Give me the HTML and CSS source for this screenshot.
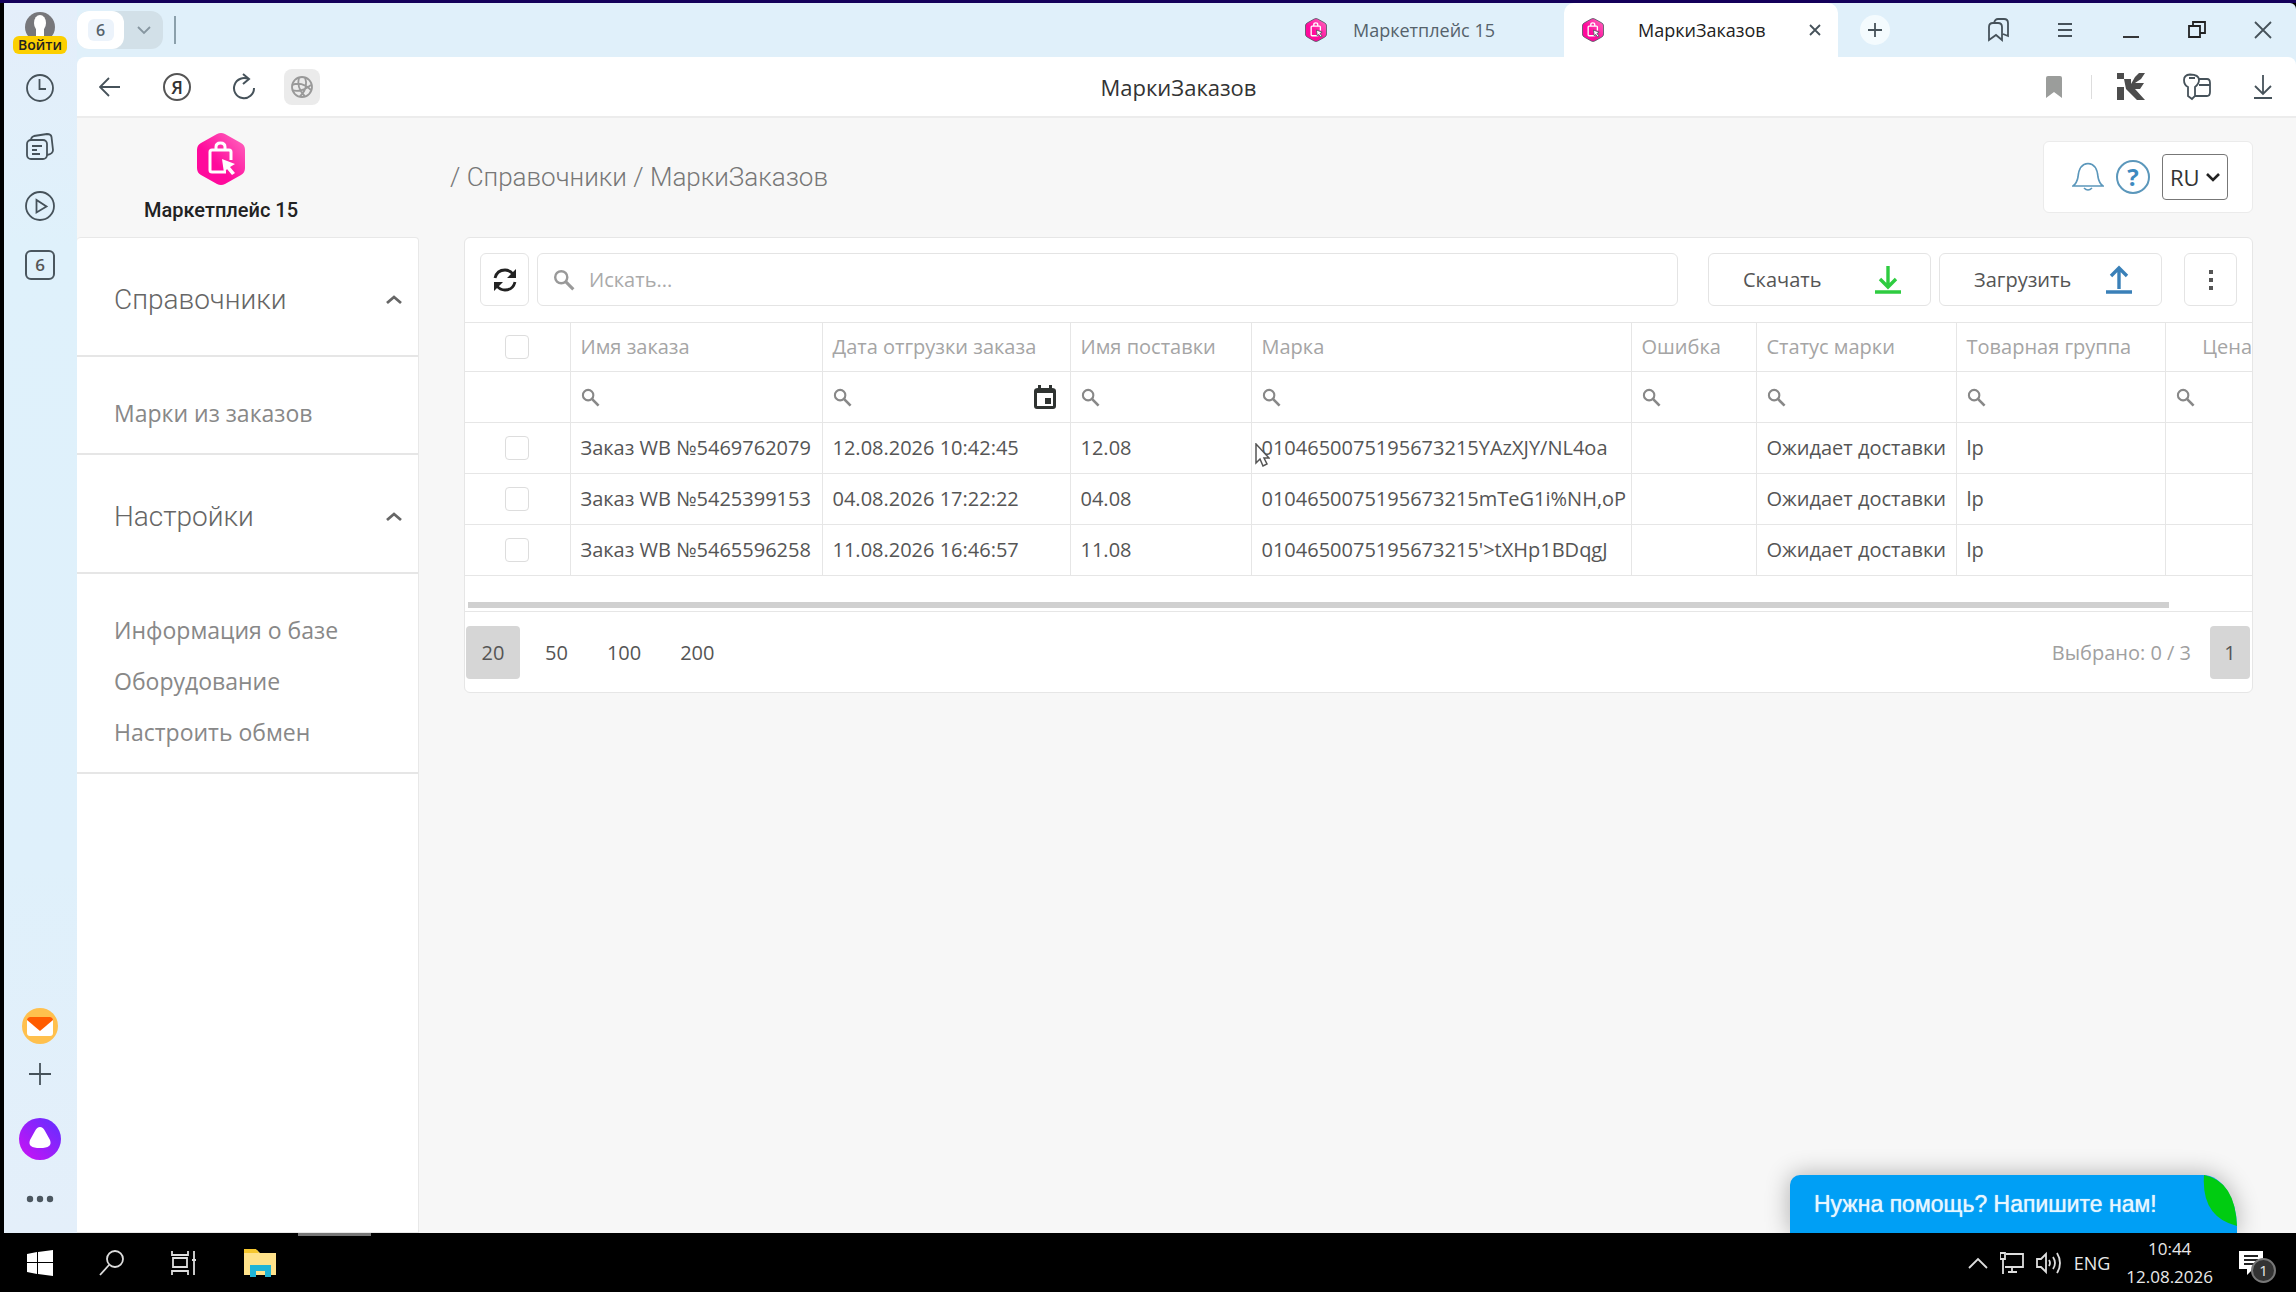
FILE: index.html
```html
<!DOCTYPE html>
<html lang="ru">
<head>
    <meta charset="UTF-8">
    <meta name="viewport" content="width=device-width, initial-scale=1.0">
    <title>МаркиЗаказов</title>
    <link rel="stylesheet" href="styles.css">
</head>
<body>
<svg class="defs" aria-hidden="true">
    <defs>
        <linearGradient id="pink" x1="0" y1="1" x2="1" y2="0">
            <stop offset="0.4" stop-color="#ff0a9c"/>
            <stop offset="1" stop-color="#ff6cc0"/>
        </linearGradient>
        <linearGradient id="violet" x1="0" y1="1" x2="1" y2="0">
            <stop offset="0.1" stop-color="#c314f5"/>
            <stop offset="0.9" stop-color="#6a2cff"/>
        </linearGradient>
    </defs>
    <symbol id="logo" viewBox="0 0 50 54">
        <path d="M21 2q4-2 8 0l16 9q4 2 4 7v18q0 5-4 7l-16 9q-4 2-8 0L5 43q-4-2-4-7V18q0-5 4-7z" fill="url(#pink)"/>
        <path d="M35 28V20q0-2-2-2H16q-2 0-2 2v18q0 2 2 2h14M20 18v-3q0-4 4.500-4t4.500 4v3" fill="none" stroke="#fff" stroke-width="3"/>
        <path d="M26 27l13 5-5 3 5 6-3 2-5-6-3 4z" fill="#fff"/>
    </symbol>
    <symbol id="search" viewBox="0 0 20 20">
        <circle cx="7.500" cy="7.500" r="5.500" fill="none" stroke="currentColor" stroke-width="2.200"/>
        <path d="M11.500 11.500l7 7" stroke="currentColor" stroke-width="2.800"/>
    </symbol>
    <symbol id="up" viewBox="0 0 16 10">
        <path d="M1 8l7-6 7 6" fill="none" stroke="currentColor" stroke-width="2.800"/>
    </symbol>
</svg>

<div class="browser">
    <nav class="rail" aria-label="Боковая панель">
        <button class="account" aria-label="Войти">
            <svg width="30" height="30" viewBox="0 0 30 30"><circle cx="15" cy="15" r="15" fill="#77777b"/><ellipse cx="15" cy="11" rx="6" ry="8" fill="#fff"/><path d="M11 16h8v9h-8z" fill="#fff"/></svg>
            <span class="badge">Войти</span>
        </button>
        <button class="rail-btn" aria-label="История">
            <svg width="30" height="30" viewBox="0 0 30 30"><circle cx="15" cy="15" r="13"/><path d="M14.500 6v10H21"/></svg>
        </button>
        <button class="rail-btn" aria-label="Коллекции">
            <svg width="30" height="30" viewBox="0 0 30 30"><rect x="2" y="8" width="20" height="19" rx="4"/><path d="M7 14h10M7 18h5M7 22h8M6 8q0-3 3-4l13-2q4 0 4.500 3l1.500 13q0 4-6 5"/></svg>
        </button>
        <button class="rail-btn" aria-label="Видео">
            <svg width="30" height="30" viewBox="0 0 30 30"><circle cx="15" cy="15" r="14"/><path d="M11.500 9v12.500l10-6z"/></svg>
        </button>
        <button class="rail-btn" aria-label="Вкладки"><span class="tab-count">6</span></button>
        <div class="rail-space"></div>
        <button class="rail-btn" aria-label="Почта">
            <svg width="36" height="36" viewBox="0 0 36 36"><circle cx="18" cy="18" r="18" fill="#ffc04d" stroke="none"/><rect x="5" y="9" width="26" height="19" rx="3" fill="#fff" stroke="none"/><path d="M5 12q0-3 3-3h20q3 0 3 3L18 23z" fill="#ff5c00" stroke="none"/></svg>
        </button>
        <button class="rail-btn rail-plus" aria-label="Добавить">
            <svg width="24" height="24" viewBox="0 0 24 24"><path d="M12 1v22M1 12h22"/></svg>
        </button>
        <button class="rail-btn rail-alice" aria-label="Алиса">
            <svg width="42" height="42" viewBox="0 0 42 42"><circle cx="21" cy="21" r="21" fill="url(#violet)" stroke="none"/><path d="M21 9q3 0 5 4l5 9q3 8-10 8t-10-8l5-9q2-4 5-4z" fill="#fff" stroke="none"/></svg>
        </button>
        <button class="rail-btn rail-more" aria-label="Ещё">
            <svg width="28" height="8" viewBox="0 0 28 8"><circle cx="4" cy="4" r="3.200" fill="#4c5760" stroke="none"/><circle cx="14" cy="4" r="3.200" fill="#4c5760" stroke="none"/><circle cx="24" cy="4" r="3.200" fill="#4c5760" stroke="none"/></svg>
        </button>
    </nav>

    <header class="tabs">
        <div class="group">
            <button class="group-count"><span>6</span></button>
            <button class="group-more" aria-label="Группы"><svg width="14" height="9" viewBox="0 0 14 9"><path d="M1 1l6 6 6-6"/></svg></button>
        </div>
        <span class="tabs-line"></span>
        <div class="tabs-space"></div>
        <a class="tab" href="#"><svg class="tab-icon"><use href="#logo"/></svg><span>Маркетплейс 15</span></a>
        <div class="tab active">
            <svg class="tab-icon"><use href="#logo"/></svg><a href="#">МаркиЗаказов</a>
            <button class="tab-close" aria-label="Закрыть вкладку"><svg width="12" height="12" viewBox="0 0 12 12"><path d="M1 1l10 10M11 1L1 11"/></svg></button>
        </div>
        <button class="new-tab" aria-label="Новая вкладка"><svg width="14" height="14" viewBox="0 0 14 14"><path d="M7 0v14M0 7h14"/></svg></button>
        <div class="window-btns">
            <button aria-label="Закладки"><svg width="22" height="24" viewBox="0 0 22 24"><path d="M1 22V9q0-4 4-4h5q4 0 4 4v13l-6-5zM6 5q1-4 4-4h6q4 0 4 4v13l-5-2"/></svg></button>
            <button aria-label="Меню"><svg width="16" height="16" viewBox="0 0 16 16"><path d="M1 2h14M1 8h14M1 14h14"/></svg></button>
            <button aria-label="Свернуть"><svg width="16" height="16" viewBox="0 0 16 16"><path d="M0 15h16" stroke="#222"/></svg></button>
            <button aria-label="Развернуть"><svg width="18" height="18" viewBox="0 0 18 18"><path d="M1 5h11v11H1zM5 5V1h12v11h-5" stroke="#222"/></svg></button>
            <button aria-label="Закрыть"><svg width="18" height="18" viewBox="0 0 18 18"><path d="M1 1l16 16M17 1L1 17"/></svg></button>
        </div>
    </header>

    <div class="navbar">
        <button class="nav-btn" aria-label="Назад"><svg width="22" height="20" viewBox="0 0 22 20"><path d="M21 10H2M10 1l-9 9 9 9"/></svg></button>
        <button class="nav-btn ya" aria-label="Яндекс">Я</button>
        <button class="nav-btn" aria-label="Обновить"><svg width="24" height="28" viewBox="0 0 24 28"><path d="M17 6.500A10 10 0 1 0 22 15M11 1l6 5-6 5" stroke-width="2"/></svg></button>
        <button class="nav-btn site" aria-label="О сайте"><svg width="22" height="22" viewBox="0 0 22 22"><circle cx="11" cy="11" r="10"/><path d="M8 1.500q-3 10 6 19M14 1.500q4 10-5 19M1 9q10-4 19 5M1 14q9 3 19-5"/></svg></button>
        <span class="page-title">МаркиЗаказов</span>
        <button class="nav-btn" aria-label="В закладки"><svg width="16" height="22" viewBox="0 0 16 22"><path d="M0 2q0-2 2-2h12q2 0 2 2v20l-8-6-8 6z" fill="#9b9d9b" stroke="none"/></svg></button>
        <span class="nav-line"></span>
        <button class="nav-btn" aria-label="Расширение"><svg width="30" height="29" viewBox="0 0 30 29"><path d="M1 1h7v6H1zM1 15h7v13H1zM8 7h7v5l4-7 4-4h6l-4 6-6 4h9l-4 6h-5l10 11h-8L10 17z" fill="#4d4d4d" stroke="none"/></svg></button>
        <button class="nav-btn" aria-label="Пароли"><svg width="28" height="28" viewBox="0 0 28 28"><path d="M5 14Q1 12 1 7q0-5 6-5.500 9 0 9 5.500 0 4-4 7v9l-3 3-4-3zM6 5h6M16 6h8q3 0 3 4v9q0 4-3 4H12M16 12h11"/></svg></button>
        <button class="nav-btn" aria-label="Загрузки"><svg width="20" height="24" viewBox="0 0 20 24"><path d="M10 0v18M2 11l8 8 8-8M1 23h18"/></svg></button>
    </div>

    <div class="page">
        <aside class="sidebar">
            <a class="brand" href="#"><svg width="50" height="54"><use href="#logo"/></svg><span>Маркетплейс 15</span></a>
            <nav class="menu">
                <button class="menu-head">Справочники <svg width="16" height="10"><use href="#up"/></svg></button>
                <div class="menu-items"><a href="#">Марки из заказов</a></div>
                <button class="menu-head">Настройки <svg width="16" height="10"><use href="#up"/></svg></button>
                <div class="menu-items">
                    <a href="#">Информация о базе</a>
                    <a href="#">Оборудование</a>
                    <a href="#">Настроить обмен</a>
                </div>
            </nav>
        </aside>

        <main class="content">
            <div class="top">
                <div class="crumbs">/ <a href="#">Справочники</a> / <a href="#">МаркиЗаказов</a></div>
                <div class="user-box">
                    <button aria-label="Уведомления"><svg width="32" height="30" viewBox="0 0 32 30"><path d="M1 24q4-3 5-9Q7 2 16 1.500 25 2 26 15q1 6 5 9zM12 26q4 4 8 0" fill="none" stroke="#5b97bb" stroke-width="1.600"/></svg></button>
                    <button class="help" aria-label="Справка">?</button>
                    <div class="lang">
                        <select aria-label="Язык"><option>RU</option></select>
                        <svg width="14" height="9" viewBox="0 0 14 9"><path d="M1 1l6 6 6-6" fill="none" stroke="#222" stroke-width="2.600"/></svg>
                    </div>
                </div>
            </div>

            <section class="card">
                <div class="toolbar">
                    <button class="tool refresh" aria-label="Обновить список">
                        <svg width="24" height="24" viewBox="0 0 24 24"><path d="M2 10Q4 2 12 2q5 0 8 4M22 14q-2 8-10 8-5 0-8-4" fill="none" stroke="#222" stroke-width="2.800"/><path d="M23 1v9h-9zM1 23v-9h9z" fill="#222"/></svg>
                    </button>
                    <label class="search"><svg width="22" height="22"><use href="#search"/></svg><input type="text" placeholder="Искать..." aria-label="Искать"></label>
                    <button class="tool wide">Скачать <svg width="26" height="30" viewBox="0 0 26 30"><path d="M13 1v20M5 14l8 8 8-8M0 27h26" fill="none" stroke="#2ecc40" stroke-width="3.400"/></svg></button>
                    <button class="tool wide">Загрузить <svg width="26" height="30" viewBox="0 0 26 30"><path d="M13 24V4M5 11l8-8 8 8M0 27h26" fill="none" stroke="#3a80b8" stroke-width="3.400"/></svg></button>
                    <button class="tool kebab" aria-label="Действия"><svg width="4" height="20" viewBox="0 0 4 20"><path d="M0 0h4v4H0zM0 8h4v4H0zM0 16h4v4H0z" fill="#555"/></svg></button>
                </div>

                <div class="table-wrap">
                    <table>
                        <colgroup>
                            <col class="c-check"><col class="c-order"><col class="c-date"><col class="c-supply"><col class="c-mark"><col class="c-error"><col class="c-status"><col class="c-group"><col>
                        </colgroup>
                        <thead>
                            <tr>
                                <th><input type="checkbox" aria-label="Выбрать все"></th>
                                <th>Имя заказа</th><th>Дата отгрузки заказа</th><th>Имя поставки</th><th>Марка</th><th>Ошибка</th><th>Статус марки</th><th>Товарная группа</th><th class="price">Цена</th>
                            </tr>
                            <tr class="filters">
                                <td></td>
                                <td><label><svg><use href="#search"/></svg><input type="text" aria-label="Имя заказа"></label></td>
                                <td><label><svg><use href="#search"/></svg><input type="text" aria-label="Дата отгрузки заказа"><svg class="calendar" viewBox="0 0 22 24"><path d="M4 0h3v3h8V0h3v3q4 0 4 3v15q0 3-3 3H3q-3 0-3-3V6q0-3 4-3zM3 8v13h16V8z" fill="#2f3331" fill-rule="evenodd"/><path d="M11 13h6v6h-6z" fill="#2f3331"/></svg></label></td>
                                <td><label><svg><use href="#search"/></svg><input type="text" aria-label="Имя поставки"></label></td>
                                <td><label><svg><use href="#search"/></svg><input type="text" aria-label="Марка"></label></td>
                                <td><label><svg><use href="#search"/></svg><input type="text" aria-label="Ошибка"></label></td>
                                <td><label><svg><use href="#search"/></svg><input type="text" aria-label="Статус марки"></label></td>
                                <td><label><svg><use href="#search"/></svg><input type="text" aria-label="Товарная группа"></label></td>
                                <td><label><svg><use href="#search"/></svg><input type="text" aria-label="Цена"></label></td>
                            </tr>
                        </thead>
                        <tbody>
                            <tr>
                                <td><input type="checkbox" aria-label="Выбрать заказ 5469762079"></td>
                                <td>Заказ WB №5469762079</td><td>12.08.2026 10:42:45</td><td>12.08</td>
                                <td class="hovered">0104650075195673215YAzXJY/NL4oa<svg class="cursor" viewBox="0 0 15 24"><path d="M1 1v19l4-4 3 7 4-2-3-6h5z" fill="#fff" stroke="#555" stroke-width="1.500"/></svg></td>
                                <td></td><td>Ожидает доставки</td><td>lp</td><td></td>
                            </tr>
                            <tr>
                                <td><input type="checkbox" aria-label="Выбрать заказ 5425399153"></td>
                                <td>Заказ WB №5425399153</td><td>04.08.2026 17:22:22</td><td>04.08</td>
                                <td>0104650075195673215mTeG1i%NH,oP</td>
                                <td></td><td>Ожидает доставки</td><td>lp</td><td></td>
                            </tr>
                            <tr>
                                <td><input type="checkbox" aria-label="Выбрать заказ 5465596258"></td>
                                <td>Заказ WB №5465596258</td><td>11.08.2026 16:46:57</td><td>11.08</td>
                                <td>0104650075195673215'&gt;tXHp1BDqgJ</td>
                                <td></td><td>Ожидает доставки</td><td>lp</td><td></td>
                            </tr>
                        </tbody>
                    </table>
                </div>
                <div class="scroll"><div class="scroll-thumb"></div></div>

                <div class="pager">
                    <button class="current">20</button>
                    <button>50</button>
                    <button>100</button>
                    <button>200</button>
                    <span class="selected">Выбрано: 0 / 3</span>
                    <button class="current">1</button>
                </div>
            </section>
        </main>

        <button class="chat">Нужна помощь? Напишите нам!
            <svg class="leaf" viewBox="0 0 34 52"><path d="M1 0Q32 6 34 51Q-2 42 1 0z" fill="#0c1"/></svg>
        </button>
    </div>
</div>

<footer class="taskbar">
    <button aria-label="Пуск"><svg width="26" height="26" viewBox="0 0 26 26"><path d="M0 4l10-2v10H0zM11 2l15-2v12H11zM0 13h10v11L0 22zM11 13h15v13l-15-2z" fill="#fff"/></svg></button>
    <button aria-label="Поиск"><svg width="26" height="26" viewBox="0 0 26 26"><circle cx="16" cy="9" r="8"/><path d="M10 15L1 25"/></svg></button>
    <button aria-label="Представление задач"><svg width="26" height="24" viewBox="0 0 26 24"><path d="M1 0v4h16V0M2 7h14v9H2zM1 24v-4h16v4M23 0v24M21 9h4"/></svg></button>
    <button class="explorer" aria-label="Проводник"><svg width="32" height="28" viewBox="0 0 32 28"><path d="M0 1h13l3 3h16v22H0z" fill="#ffe28a"/><path d="M0 0h12l3 4H0z" fill="#f5c62e"/><path d="M6 16h21v12h-6v-6h-9v6H6z" fill="#1fb4d6"/></svg></button>
    <span class="running"></span>
    <div class="tray">
        <svg width="20" height="12" viewBox="0 0 20 12"><path d="M1 11l9-9 9 9"/></svg>
        <svg width="24" height="22" viewBox="0 0 24 22"><path d="M6 2h17v13H5M3 8v14M8 20h9M12 15v5M0 1h5v6H0z"/></svg>
        <svg width="26" height="24" viewBox="0 0 26 24"><path d="M1 8h4l5-5v18l-5-5H1zM13 9q2 3 0 6M17 6q4 6 0 12M21 2q6 10 0 20"/></svg>
        <span class="input-lang">ENG</span>
        <div class="clock"><time>10:44</time><time>12.08.2026</time></div>
        <button class="notice" aria-label="Уведомления системы"><svg width="24" height="24" viewBox="0 0 24 24"><path d="M0 0h24v18H14l-6 6v-6H0z" fill="#fff"/><path d="M5 5h14M5 9h14M5 13h10" stroke="#222"/></svg><span>1</span></button>
    </div>
</footer>
</body>
</html>
```
FILE: styles.css
```css
* {
    box-sizing: border-box;
}
body {
    margin: 0;
    min-height: 100vh;
    display: flex;
    flex-direction: column;
    padding: 3px 0 0 4px;
    background: linear-gradient(#14005a 3px, #000 3px);
    font-family: "Open Sans", sans-serif;
    font-size: 20px;
    color: #555;
}
button {
    border: none;
    padding: 0;
    background: none;
    font: inherit;
    color: inherit;
    display: flex;
    align-items: center;
    justify-content: center;
    cursor: pointer;
}
a {
    color: inherit;
    text-decoration: none;
}
svg {
    flex-shrink: 0;
}
.defs {
    position: absolute;
    width: 0;
    height: 0;
}

/* browser frame */
.browser {
    flex: 1;
    display: grid;
    grid-template-columns: 73px 1fr;
    grid-template-rows: 54px 61px 1fr;
    background: #e0f0fa;
    border-radius: 6px 6px 0 0;
}
.rail {
    grid-row: 1 / 4;
    display: flex;
    flex-direction: column;
    align-items: center;
    padding: 5px 1px 0 0;
    background: linear-gradient(#e4eefa, #dff1fb 20%, #dff0fb 70%, #e4effa);
}
.account {
    flex-direction: column;
    height: 50px;
}
.badge {
    margin-top: -6px;
    width: 54px;
    border-radius: 6px;
    background: #fccf00;
    color: #222;
    font: 600 14px/18px "Open Sans", sans-serif;
}
.rail-btn {
    height: 59px;
    width: 60px;
}
.rail-btn svg,
.tabs svg,
.navbar svg {
    fill: none;
    stroke: #46525a;
    stroke-width: 1.8;
}
.tab-count {
    width: 30px;
    height: 30px;
    border: 2px solid #4a565e;
    border-radius: 6px;
    font: 600 17px/26px "Open Sans", sans-serif;
}
.rail-space {
    flex: 1;
}
.rail-plus {
    height: 38px;
}
.rail-alice {
    height: 91px;
}
.rail-more {
    height: 30px;
    margin-bottom: 19px;
}
.tabs {
    display: flex;
    align-items: center;
    font-size: 18px;
    color: #55626b;
}
.group {
    display: flex;
    height: 38px;
    width: 86px;
    border-radius: 12px;
    background: #d2e0e8;
}
.group-count {
    width: 47px;
    border-radius: 12px;
    background: #fff;
}
.group-count span {
    width: 26px;
    border-radius: 6px;
    background: #ecf3fb;
    font-weight: 600;
    font-size: 16px;
}
.group-more {
    flex: 1;
}
.group-more svg {
    stroke: #8696a0;
}
.tabs-line {
    width: 2px;
    height: 28px;
    margin-left: 11px;
    background: #8ba0ab;
}
.tabs-space {
    flex: 1;
}
.tab {
    display: flex;
    align-items: center;
    align-self: stretch;
    width: 277px;
    padding-left: 18px;
    gap: 26px;
}
.tab-icon {
    width: 22px;
    height: 24px;
}
.tab.active {
    width: 274px;
    background: #fff;
    border-radius: 10px 10px 0 0;
    color: #222;
    gap: 34px;
}
.tab-close {
    margin-left: auto;
    margin-right: 17px;
}
.new-tab {
    width: 30px;
    height: 30px;
    margin: 0 76px 0 22px;
    border-radius: 50%;
    background: #f4fbfe;
}
.window-btns {
    display: flex;
}
.window-btns button {
    width: 66px;
    height: 40px;
}
.navbar {
    display: flex;
    align-items: center;
    background: #fff;
    border-bottom: 2px solid #ececec;
    border-radius: 8px 8px 0 0;
}
.nav-btn {
    width: 66px;
    height: 36px;
}
.ya {
    width: 28px;
    height: 28px;
    margin: 0 20px;
    border: 2px solid #555;
    border-radius: 50%;
    color: #333;
    font-size: 18px;
    font-weight: 600;
}
.site {
    width: 36px;
    margin-left: 7px;
    border-radius: 8px;
    background: #ebebeb;
}
.site svg {
    stroke: #999;
}
.page-title {
    flex: 1;
    text-align: center;
    padding-left: 16px;
    font-size: 22px;
    color: #333;
}
.nav-line {
    width: 1px;
    height: 24px;
    margin: 0 6px 0 4px;
    background: #ddd;
}

/* application */
.page {
    position: relative;
    display: flex;
    background: #f7f7f7;
    overflow: hidden;
}
.sidebar {
    width: 342px;
    display: flex;
    flex-direction: column;
}
.brand {
    height: 119px;
    padding: 14px 54px 0 0;
    display: flex;
    flex-direction: column;
    align-items: center;
    gap: 6px;
    color: #222;
    font: 500 20px/36px Roboto, sans-serif;
}
.menu {
    flex: 1;
    background: #fff;
    border: 1px solid #e8e8e8;
    border-left: none;
    border-radius: 4px 4px 0 0;
    color: #888;
}
.menu-head {
    width: 100%;
    height: 119px;
    justify-content: space-between;
    padding: 7px 16px 0 37px;
    border-bottom: 2px solid #e6e6e6;
    font: 28px/32px Roboto, sans-serif;
    font-weight: 300;
    color: #666;
}
.menu-items {
    display: flex;
    flex-direction: column;
    gap: 18px;
    padding: 40px 37px 23px;
    border-bottom: 2px solid #e6e6e6;
    font-size: 23px;
    line-height: 33px;
}
.content {
    flex: 1;
    min-width: 0;
    padding: 23px 43px 0 31px;
}
.top {
    display: flex;
    align-items: center;
    justify-content: space-between;
    height: 72px;
    margin: 0 0 24px;
}
.crumbs {
    color: #777;
    font: 300 26px/32px Roboto, sans-serif;
}
.user-box {
    display: flex;
    align-items: center;
    gap: 12px;
    height: 72px;
    padding: 0 24px 0 28px;
    background: #fff;
    border: 1px solid #ebebeb;
    border-radius: 6px;
}
.help {
    width: 34px;
    height: 34px;
    border: 2px solid #5b97bb;
    border-radius: 50%;
    color: #3d8abf;
    font: 700 24px/28px "Open Sans", sans-serif;
}
.lang {
    display: flex;
    align-items: center;
    width: 66px;
    height: 46px;
    padding-right: 7px;
    border: 1px solid #777;
    border-radius: 4px;
}
.lang select {
    appearance: none;
    flex: 1;
    width: 30px;
    height: 44px;
    border: none;
    padding: 0 0 0 7px;
    background: none;
    font: 22px/30px "Open Sans", sans-serif;
    color: #333;
}
.card {
    margin-left: 14px;
    background: #fff;
    border: 1px solid #e6e6e6;
    border-radius: 6px;
}
.toolbar {
    display: flex;
    gap: 8px;
    padding: 15px 15px 16px;
}
.tool,
.search {
    height: 53px;
    border: 1px solid #e4e4e4;
    border-radius: 6px;
}
.refresh {
    width: 49px;
}
.search {
    flex: 1;
    display: flex;
    align-items: center;
    gap: 14px;
    margin-right: 22px;
    padding-left: 15px;
    color: #999;
}
input[type="text"] {
    flex: 1;
    min-width: 0;
    height: 40px;
    border: none;
    padding: 0;
    outline: none;
    background: none;
    font: inherit;
}
input::placeholder {
    color: #aaa;
}
.wide {
    width: 223px;
    justify-content: space-between;
    padding: 0 29px 0 34px;
}
.kebab {
    width: 53px;
    margin-left: 14px;
}
.table-wrap {
    overflow: hidden;
}
table {
    width: 100%;
    table-layout: fixed;
    border-collapse: collapse;
}
.c-check { width: 105px; }
.c-order { width: 252px; }
.c-date { width: 248px; }
.c-supply { width: 181px; }
.c-mark { width: 380px; }
.c-error { width: 125px; }
.c-status { width: 200px; }
.c-group { width: 209px; }
th,
td {
    height: 51px;
    padding: 0 0 0 10px;
    border: 1px solid #e6e6e6;
    text-align: left;
    font-weight: 400;
    white-space: nowrap;
    line-height: 28px;
}
th {
    height: 49px;
    color: #a5a5a5;
}
th:first-child,
td:first-child {
    border-left: none;
    padding: 0;
    text-align: center;
}
th:last-child,
td:last-child {
    border-right: none;
}
.price {
    text-align: right;
}
input[type="checkbox"] {
    appearance: none;
    display: block;
    width: 24px;
    height: 24px;
    margin: 0 auto;
    border: 1px solid #ddd;
    border-radius: 4px;
}
.filters label {
    display: flex;
    align-items: center;
    justify-content: space-between;
    padding-right: 14px;
    color: #888;
}
.filters svg {
    width: 19px;
    height: 19px;
}
.filters .calendar {
    width: 22px;
    height: 24px;
}
.hovered {
    position: relative;
}
.cursor {
    position: absolute;
    left: 3px;
    top: 20px;
    width: 15px;
    height: 24px;
}
.scroll {
    padding: 26px 83px 3px 3px;
    border-bottom: 1px solid #e6e6e6;
}
.scroll-thumb {
    height: 6px;
    background: #d0d0d0;
}
.pager {
    display: flex;
    align-items: center;
    gap: 11px;
    padding: 14px 2px 13px 1px;
}
.pager button {
    height: 53px;
    padding: 0 14px;
    border-radius: 4px;
}
.pager .current {
    min-width: 40px;
    background: #d6d6d6;
}
.pager .current:first-child {
    min-width: 54px;
}
.selected {
    margin-left: auto;
    padding-right: 8px;
    color: #a0a0a0;
}
.chat {
    position: absolute;
    right: 59px;
    bottom: 0;
    width: 447px;
    height: 58px;
    justify-content: flex-start;
    padding-left: 24px;
    background: #009ff5;
    border-radius: 10px 34px 0 0 / 10px 52px 0 0;
    box-shadow: 0 0 24px rgba(0, 0, 0, 0.3);
    color: #e6f6ff;
    font: 23px/28px "Liberation Sans", sans-serif;
    text-shadow: 0 0 1px #e6f6ff;
}
.leaf {
    position: absolute;
    right: 0;
    top: 0;
    width: 34px;
    height: 52px;
}

/* system taskbar */
.taskbar {
    display: flex;
    align-items: center;
    height: 59px;
    background: #000;
    color: #e8e8e8;
    font-size: 18px;
}
.taskbar svg {
    fill: none;
    stroke: #ddd;
    stroke-width: 1.8;
}
.taskbar button svg path[fill] {
    stroke: none;
}
.taskbar > button {
    width: 72px;
    height: 59px;
}
.taskbar .explorer {
    width: 80px;
}
.running {
    align-self: flex-start;
    width: 73px;
    height: 3px;
    margin-left: -2px;
    background: #777;
}
.tray {
    display: flex;
    align-items: center;
    gap: 12px;
    margin-left: auto;
    padding-right: 20px;
}
.clock {
    display: flex;
    flex-direction: column;
    align-items: center;
    margin: 0 14px 0 4px;
    font-size: 17px;
    line-height: 28px;
}
.notice {
    position: relative;
    width: 37px;
    height: 40px;
    justify-content: flex-start;
}
.notice span {
    position: absolute;
    right: 0;
    bottom: 0;
    width: 25px;
    height: 25px;
    border: 2px solid #777;
    border-radius: 50%;
    background: #333;
    font-size: 15px;
    line-height: 21px;
}
```
